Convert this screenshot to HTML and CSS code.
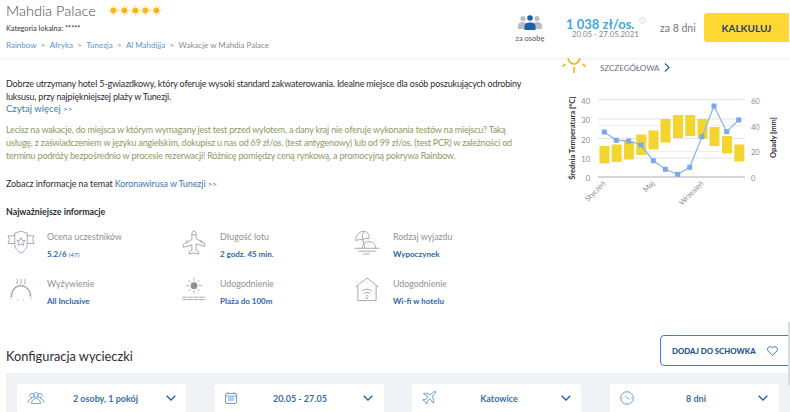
FILE: index.html
```html
<!DOCTYPE html>
<html lang="pl">
<head>
	<meta charset="utf-8">
	<title>Mahdia Palace</title>
	<link rel="stylesheet" href="styles.css">
</head>
<body>
	<div class="scrollThumb"></div>
	<div class="topBar">
		<div class="hotelInfo">
			<div class="titleRow">
				<h1 class="hotelName">Mahdia Palace</h1>
				<div class="stars">
					<svg width="11" height="11" viewBox="0 0 11 11"><use href="#sun"/></svg>
					<svg width="11" height="11" viewBox="0 0 11 11"><use href="#sun"/></svg>
					<svg width="11" height="11" viewBox="0 0 11 11"><use href="#sun"/></svg>
					<svg width="11" height="11" viewBox="0 0 11 11"><use href="#sun"/></svg>
					<svg width="11" height="11" viewBox="0 0 11 11"><use href="#sun"/></svg>
				</div>
			</div>
			<div class="localCat">Kategoria lokalna: *****</div>
			<div class="crumbs">
				<a>Rainbow</a><span class="sep">&gt;</span><a>Afryka</a><span class="sep">&gt;</span><a>Tunezja</a><span class="sep">&gt;</span><a>Al Mahdijja</a><span class="sep">&gt;</span><span class="current">Wakacje w Mahdia Palace</span>
			</div>
		</div>
		<div class="perPerson">
			<svg width="24" height="16" viewBox="0 0 24 16">
				<circle cx="5" cy="3.5" r="2.6" fill="#b9bcc2"/>
				<circle cx="19" cy="3.5" r="2.6" fill="#b9bcc2"/>
				<path d="M0 14v-3.5c0-2 2-3.5 5-3.5s5 1.500 5 3.500V14z" fill="#b9bcc2"/>
				<path d="M14 14v-3.500c0-2 2-3.500 5-3.500s5 1.500 5 3.500V14z" fill="#b9bcc2"/>
				<circle cx="12" cy="3" r="2.800" fill="#1f5fa8"/>
				<path d="M6.500 15v-4c0-2 2.300-3.500 5.500-3.500s5.500 1.500 5.500 3.500v4z" fill="#1f5fa8"/>
			</svg>
			<span>za osobę</span>
		</div>
		<div class="priceBox">
			<div class="price">1 038 zł/os.</div>
			<div class="priceDates">20.05 - 27.05.2021</div>
			<svg class="infoIcon" width="7" height="7" viewBox="0 0 7 7"><circle cx="3.500" cy="3.500" r="3" fill="none" stroke="#c4d6de" stroke-width=".7"/><path d="M3.500 3v2M3.500 1.800v.5" stroke="#c4d6de" stroke-width=".7"/></svg>
		</div>
		<div class="days">za 8 dni</div>
		<button class="btnCalc">KALKULUJ</button>
	</div>

	<div class="main">
		<div class="leftCol">
			<p class="lead">Dobrze utrzymany hotel 5-gwiazdkowy, który oferuje wysoki standard zakwaterowania. Idealne miejsce dla osób poszukujących odrobiny luksusu, przy najpiękniejszej plaży w Tunezji.</p>
			<a class="more">Czytaj więcej <span class="arrows">&gt;&gt;</span></a>
			<p class="promo">Lecisz na wakacje, do miejsca w którym wymagany jest test przed wylotem, a dany kraj nie oferuje wykonania testów na miejscu? Taką usługę, z zaświadczeniem w języku angielskim, dokupisz u nas od 69 zł/os. (test antygenowy) lub od 99 zł/os. (test PCR) w zależności od terminu podróży bezpośrednio w procesie rezerwacji! Różnicę pomiędzy ceną rynkową, a promocyjną pokrywa Rainbow.</p>
			<p class="covid">Zobacz informacje na temat <a>Koronawirusa w Tunezji <span class="arrows">&gt;&gt;</span></a></p>
			<h2 class="infoHead">Najważniejsze informacje</h2>
			<div class="infoGrid">
				<div class="infoItem">
					<svg class="infoPic" width="30" height="25" viewBox="0 0 31 26">
						<path d="M9 3.500 15.500 1 22 3.500V15c0 4-3 7-6.500 9C12 22 9 19 9 15z"/>
						<path d="M15.500 8l1.300 2.700 3 .4-2.200 2 .6 3-2.700-1.500-2.700 1.500.6-3-2.200-2 3-.4z"/>
						<path d="M9 6H2l1.500 4L2 14h7M22 6h7l-1.500 4 1.500 4h-7"/>
					</svg>
					<div><div class="infoLabel">Ocena uczestników</div><div class="infoValue">5.2/6 <small>(47)</small></div></div>
				</div>
				<div class="infoItem">
					<svg class="infoPic" width="30" height="25" viewBox="-2 0 30 26">
						<path d="M13 1c1.500 0 2.200 2 2.200 4v4l9 5v3l-9-2.500V21l2.800 2v2l-5-1-5 1v-2l2.800-2v-5.500l-9 2.500v-3l9-5V5c0-2 .7-4 2.200-4z"/>
						<path d="M5.500 10.500v3M20.500 10.500v3M10.800 5h4.400"/>
					</svg>
					<div><div class="infoLabel">Długość lotu</div><div class="infoValue">2 godz. 45 min.</div></div>
				</div>
				<div class="infoItem">
					<svg class="infoPic" width="30" height="25" viewBox="0 0 26 26">
						<path d="M1.500 11C1 5 6 .5 10.500 1.500 14.500 2.500 15.500 6 15 9 12 8.500 10 9 8.500 10 6.500 9.800 4 10 1.500 11z"/>
						<path d="M8.500 10C7.500 6 8.500 3 10.500 1.500M8.500 10 11 19"/>
						<path d="M8 19c0-4 3-7 7-7s7 3 7 7"/>
						<path d="M0 19h26M4 22h18M9 25h7"/>
					</svg>
					<div><div class="infoLabel">Rodzaj wyjazdu</div><div class="infoValue">Wypoczynek</div></div>
				</div>
				<div class="infoItem">
					<svg class="infoPic" width="30" height="25" viewBox="0 0 26 26">
						<path d="M3 21c0-7 4.500-12 10-12s10 5 10 12" stroke-dasharray="2 .6" stroke-width="1.500"/>
						<path d="M9 7.500c-1-2 1-3 0-5.500M13 7.500c-1-2 1-3 0-5.500M17 7.500c-1-2 1-3 0-5.500"/>
						<path d="M2 23h1M9 24h1M15 24h1M23 23h1"/>
					</svg>
					<div><div class="infoLabel">Wyżywienie</div><div class="infoValue">All Inclusive</div></div>
				</div>
				<div class="infoItem">
					<svg class="infoPic" width="30" height="25" viewBox="0 0 26 26">
						<circle cx="13" cy="9" r="3.500" fill="#8d8f9e" stroke="none"/>
						<path d="M13 1v3M13 14v3M5 9h3M18 9h3M7.500 3.500l2 2M18.500 3.500l-2 2M7.500 14.500l2-2M18.500 14.500l-2-2"/>
						<path d="M1 21h24M1 23.500h24" stroke-dasharray="5 .7"/>
					</svg>
					<div><div class="infoLabel">Udogodnienie</div><div class="infoValue">Plaża do 100m</div></div>
				</div>
				<div class="infoItem">
					<svg class="infoPic" width="30" height="25" viewBox="0 0 26 26">
						<path d="M1 10.500 13 1l12 9.500"/>
						<path d="M3.500 9v15.500h19V9"/>
						<path d="M7.500 15c3-3 8-3 11 0M9.500 17.500c2-2 5-2 7 0M11.500 20c.8-.8 2.200-.8 3 0"/>
						<circle cx="13" cy="22" r=".6"/>
					</svg>
					<div><div class="infoLabel">Udogodnienie</div><div class="infoValue">Wi-fi w hotelu</div></div>
				</div>
			</div>
		</div>

		<div class="rightCol">
			<div class="weatherHead">
				<svg width="24" height="15" viewBox="0 0 24 15">
					<path d="M6 0c1 4 3.500 6 6 6s5-2 6-6" fill="none" stroke="#f4b81c" stroke-width="1.700"/>
					<path d="M12 9v6M3.500 6 .5 8.500M20.500 6l3 2.500" fill="none" stroke="#f4b81c" stroke-width="1.700"/>
				</svg>
				<span class="detail">SZCZEGÓŁOWA</span>
				<svg class="detailArrow" width="6" height="9" viewBox="0 0 6 9"><path d="M1 .5 5 4.500 1 8.500" fill="none" stroke="#2467ad" stroke-width="1.200"/></svg>
			</div>
			<svg class="chart" width="240" height="135" viewBox="550 85 240 135">
				<g stroke="#e4e4e4" stroke-width="1">
					<path d="M598 99.500H745M598 119H745M598 138.500H745M598 158H745"/>
					<path d="M598 125.500H745M598 151.500H745" stroke="#eeeeee"/>
				</g>
				<path d="M598 177H745" stroke="#c9c9c9" stroke-width="1.500"/>
				<g fill="#f2d52e">
					<rect x="599.500" y="146" width="10" height="17.500"/>
					<rect x="611.700" y="144.500" width="10" height="17.500"/>
					<rect x="624" y="141" width="10" height="18.500"/>
					<rect x="636.300" y="134.500" width="10" height="20.500"/>
					<rect x="648.500" y="130.500" width="10" height="19"/>
					<rect x="660.500" y="119" width="10" height="23.500"/>
					<rect x="673" y="115" width="10" height="23"/>
					<rect x="685.300" y="115" width="10" height="21"/>
					<rect x="697.500" y="119" width="10" height="19.500"/>
					<rect x="709.500" y="127" width="10" height="19"/>
					<rect x="722" y="136" width="10" height="17.500"/>
					<rect x="734.300" y="144.500" width="10" height="17"/>
				</g>
				<polyline fill="none" stroke="#8fb6ec" stroke-width="1.300" points="604.300,132 616.300,140.300 628.700,141 641,145 653.300,160.700 665.300,169.300 677.700,174.300 689.700,167.300 702,136.700 714,106 726.700,131.700 738.700,120"/>
				<g fill="#7aa7e6">
					<rect x="601.800" y="129.500" width="5" height="5"/>
					<rect x="613.800" y="137.800" width="5" height="5"/>
					<rect x="626.200" y="138.500" width="5" height="5"/>
					<rect x="638.500" y="142.500" width="5" height="5"/>
					<rect x="650.800" y="158.200" width="5" height="5"/>
					<rect x="662.800" y="166.800" width="5" height="5"/>
					<rect x="675.200" y="171.800" width="5" height="5"/>
					<rect x="687.200" y="164.800" width="5" height="5"/>
					<rect x="699.500" y="134.200" width="5" height="5"/>
					<rect x="711.500" y="103.500" width="5" height="5"/>
					<rect x="724.200" y="129.200" width="5" height="5"/>
					<rect x="736.200" y="117.500" width="5" height="5"/>
				</g>
				<g class="axisNum" text-anchor="end">
					<text x="590" y="104">40</text>
					<text x="590" y="123">30</text>
					<text x="590" y="143">20</text>
					<text x="590" y="162">10</text>
					<text x="590" y="181">0</text>
				</g>
				<g class="axisNum">
					<text x="751" y="104">60</text>
					<text x="751" y="130">40</text>
					<text x="751" y="155">20</text>
					<text x="751" y="181">0</text>
				</g>
				<text class="axisTitle" transform="translate(574.500 138) rotate(-90)" text-anchor="middle">Średnia Temperatura [°C]</text>
				<text class="axisTitle" transform="translate(776 137.500) rotate(-90)" text-anchor="middle">Opady [mm]</text>
				<g class="axisMonth" text-anchor="end">
					<text transform="translate(606 184) rotate(-45)">Styczeń</text>
					<text transform="translate(655 184) rotate(-45)">Maj</text>
					<text transform="translate(704 184) rotate(-45)">Wrzesień</text>
				</g>
			</svg>
		</div>
	</div>

	<div class="configHead">
		<h2 class="configTitle">Konfiguracja wycieczki</h2>
		<button class="btnSave">DODAJ DO SCHOWKA
			<svg width="11" height="10" viewBox="0 0 11 10"><path d="M5.500 9.300 1.200 5C-.3 3.300 1 .7 3 .7c1.200 0 2 .6 2.500 1.500C6 1.300 6.800.7 8 .7c2 0 3.300 2.600 1.800 4.300z" fill="none" stroke="#2467ad" stroke-width=".9"/></svg>
		</button>
	</div>
	<div class="configPanel">
		<div class="configCard">
			<svg width="18" height="12" viewBox="0 0 18 12" fill="none" stroke="#5f93cf" stroke-width=".8"><circle cx="5" cy="3.500" r="2.200"/><circle cx="13" cy="3.500" r="2.200"/><circle cx="9" cy="3" r="2.400"/><path d="M1 11c0-3 2-4.500 4-4.500M17 11c0-3-2-4.500-4-4.500M4.500 11.500c0-3 2-5 4.500-5s4.500 2 4.500 5z"/></svg>
			<span>2 osoby, 1 pokój</span>
			<svg class="chev" width="10" height="6" viewBox="0 0 10 6"><use href="#chev"/></svg>
		</div>
		<div class="configCard">
			<svg width="12" height="12" viewBox="0 0 12 12" fill="none" stroke="#5f93cf" stroke-width=".9"><rect x=".5" y="1.500" width="11" height="10" rx="1.500"/><path d="M.5 4h11M3 0v2M9 0v2M3 6h6M3 8h6" /></svg>
			<span>20.05 - 27.05</span>
			<svg class="chev" width="10" height="6" viewBox="0 0 10 6"><use href="#chev"/></svg>
		</div>
		<div class="configCard">
			<svg width="15" height="14" viewBox="0 0 15 14" fill="none" stroke="#5f93cf" stroke-width=".9"><path d="M14 1c-1-.7-2.500-.3-3.500.7L8.500 3.500 2.500 2 1.500 3l4.500 2.700-2.500 2.800-2-.3-.8.800 2.500 1.500 1.500 2.500.8-.8-.3-2 2.800-2.500L11 12l1-1-1.500-6 1.800-2c1-1 1.400-1.300.7-2z"/></svg>
			<span>Katowice</span>
			<svg class="chev" width="10" height="6" viewBox="0 0 10 6"><use href="#chev"/></svg>
		</div>
		<div class="configCard">
			<svg width="14" height="14" viewBox="0 0 14 14" fill="none" stroke="#5f93cf" stroke-width=".9"><circle cx="7" cy="7" r="6.300"/><path d="M7 1.800v1M7 11.200v1M1.800 7h1M11.200 7h1M7 7 5 4.500M7 7l2.500 1.500" stroke-width=".7"/></svg>
			<span>8 dni</span>
			<svg class="chev" width="10" height="6" viewBox="0 0 10 6"><use href="#chev"/></svg>
		</div>
	</div>

	<svg class="defs" width="0" height="0">
		<symbol id="sun" viewBox="0 0 11 11">
			<circle cx="5.500" cy="5.500" r="3" fill="#fbb616"/>
			<path d="M5.500 0v2M5.500 9v2M0 5.500h2M9 5.500h2M1.700 1.700l1.300 1.300M8 8l1.300 1.300M9.300 1.700 8 3M3 8 1.700 9.300" stroke="#fbd36a" stroke-width=".8"/>
		</symbol>
		<symbol id="chev" viewBox="0 0 10 6">
			<path d="M.7.7 5 5 9.300.7" fill="none" stroke="#1f5fa8" stroke-width="1.300"/>
		</symbol>
	</svg>
</body>
</html>
```

FILE: styles.css
```css
html, body {
	margin: 0;
	background: #fff;
	font-family: "Lato", "Liberation Sans", sans-serif;
	color: #2c2c34;
}
body {
	width: 790px;
	height: 412px;
	overflow: hidden;
}
a {
	color: #3c78b8;
}
.defs {
	display: block;
}
.scrollThumb {
	position: absolute;
	right: 0;
	top: 322px;
	width: 2px;
	height: 63px;
	background: #d9dbde;
}

.topBar {
	display: flex;
	align-items: flex-start;
	height: 58px;
	padding-left: 6px;
	border-bottom: 2px solid #f6f6f6;
}
.hotelInfo {
	width: 500px;
}
.titleRow {
	display: flex;
	align-items: center;
	height: 21px;
}
.hotelName {
	margin: 0;
	font-size: 14.500px;
	font-weight: 300;
	color: #4a4a4f;
	width: 102px;
	white-space: nowrap;
}
.stars {
	display: flex;
	margin-left: 0;
}
.stars svg {
	width: 10.800px;
	flex: none;
}
.localCat {
	font-size: 7.300px;
	margin-top: 3px;
	color: #333;
}
.crumbs {
	font-size: 8px;
	margin-top: 7px;
	display: flex;
}
.crumbs a {
	color: #5b93cf;
}
.crumbs .sep {
	color: #8a8a8a;
	margin: 0 4.300px;
}
.crumbs .current {
	color: #8a8a8a;
}
.perPerson {
	width: 48px;
	margin-top: 15px;
	display: flex;
	flex-direction: column;
	align-items: center;
	font-size: 7.500px;
	color: #55555c;
}
.perPerson span {
	margin-top: 3px;
}
.priceBox {
	position: relative;
	margin-top: 18px;
	margin-left: 12px;
	width: 94px;
}
.price {
	font-size: 13px;
	font-weight: 700;
	color: #3fa9d9;
	line-height: 12px;
	white-space: nowrap;
}
.priceDates {
	font-size: 7.800px;
	color: #85858a;
	line-height: 9px;
	margin-left: 6px;
	white-space: nowrap;
}
.infoIcon {
	position: absolute;
	left: 73px;
	top: -1px;
}
.days {
	font-size: 10.500px;
	color: #77777d;
	margin-top: 22px;
	width: 44px;
}
.btnCalc {
	width: 85px;
	height: 29px;
	margin-top: 13px;
	border: none;
	border-radius: 3px 0 0 3px;
	background: #fdd835;
	color: #24416b;
	font-family: inherit;
	font-weight: 700;
	font-size: 10px;
	padding: 0;
}

.main {
	display: flex;
}
.leftCol {
	width: 534px;
	padding: 17px 0 11px 6px;
}
.lead, .promo, .covid {
	margin: 0;
	font-size: 9px;
	line-height: 13px;
	letter-spacing: -.18px;
}
.more {
	display: block;
	font-size: 9.500px;
	line-height: 11px;
}
.arrows {
	font-size: 8px;
}
.promo {
	color: #8c9a63;
	margin-top: 8px;
	letter-spacing: -.2px;
	max-width: 515px;
}
.covid {
	margin-top: 15px;
	letter-spacing: -.1px;
}
.infoHead {
	font-size: 8.800px;
	font-weight: 700;
	margin: 15px 0 0;
	line-height: 12px;
	color: #2c2c34;
}
.infoGrid {
	display: grid;
	grid-template-columns: 173px 173px 173px;
	grid-auto-rows: 46.500px;
	margin-top: 13px;
}
.infoItem {
	display: flex;
}
.infoPic {
	flex: none;
	margin-top: -1px;
	margin-right: 11px;
	fill: none;
	stroke: #8d8f9e;
	stroke-width: .8;
	overflow: visible;
}
.infoLabel {
	font-size: 8.800px;
	color: #8f8f96;
	line-height: 12px;
}
.infoValue {
	font-size: 8px;
	font-weight: 700;
	color: #2c66ad;
	line-height: 10px;
	margin-top: 6px;
}
.infoValue small {
	font-size: 6.500px;
	font-weight: 400;
}

.rightCol {
	width: 240px;
	margin-top: -2px;
	margin-left: 10px;
}
.weatherHead {
	display: flex;
	align-items: flex-end;
	padding-left: 12px;
	height: 15px;
}
.detail {
	font-size: 8px;
	line-height: 10px;
	color: #6d6f8c;
	margin-left: 14px;
	margin-right: 4px;
}
.detailArrow {
	margin-bottom: 1px;
}
.chart {
	display: block;
	margin-top: 12px;
}
.axisNum text, .axisMonth text {
	font-size: 7.500px;
	fill: #8a8a8a;
}
.axisTitle {
	font-size: 7.500px;
	font-weight: 700;
	fill: #2f2f33;
}

.configHead {
	display: flex;
	justify-content: space-between;
	padding-left: 6px;
}
.configTitle {
	margin: 0;
	font-size: 12.800px;
	font-weight: 400;
	color: #2c2c34;
	line-height: 17px;
	padding-top: 13px;
}
.btnSave {
	width: 130px;
	height: 31px;
	border: 1px solid #3f7fc1;
	border-radius: 4px 0 0 4px;
	background: #fff;
	color: #24528f;
	font-family: inherit;
	font-weight: 900;
	font-size: 7.800px;
	display: flex;
	align-items: center;
	justify-content: space-between;
	padding: 0 11px;
}
.configPanel {
	margin: 7px 0 0 6px;
	padding: 11px 12px 0 11px;
	background: #f0f3f6;
	display: grid;
	grid-template-columns: repeat(4, 169px);
	column-gap: 28.500px;
	height: 40px;
}
.configCard {
	display: flex;
	align-items: center;
	justify-content: space-between;
	background: #fff;
	border-radius: 3px;
	height: 40px;
	padding: 0 10px;
	box-sizing: border-box;
	font-size: 9px;
	font-weight: 700;
	color: #3a6ea8;
}
.configCard > span {
	padding-bottom: 12px;
}
.configCard > svg {
	margin-bottom: 12px;
}
```
